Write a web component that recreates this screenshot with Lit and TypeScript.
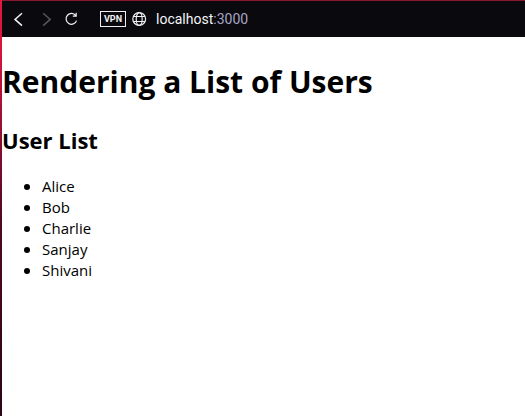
import { LitElement, html, css } from "lit";
import { customElement, property } from "lit/decorators.js";

@customElement("browser-bar")
export class BrowserBar extends LitElement {
  @property() host = "localhost";
  @property() port = "3000";

  static styles = css`
    :host {
      display: flex;
      align-items: center;
      gap: 12px;
      height: 36px;
      padding-left: 10px;
      background: #09090e;
      font-family: Roboto, sans-serif;
    }
    .nav,
    .site {
      display: flex;
      align-items: center;
    }
    .nav {
      gap: 10px;
    }
    button {
      display: flex;
      align-items: center;
      justify-content: center;
      width: 16px;
      height: 16px;
      padding: 0;
      border: 0;
      background: none;
      color: #f0f0f4;
      font: inherit;
    }
    button:disabled {
      color: #56565c;
    }
    svg {
      display: block;
      flex: none;
      fill: none;
      stroke: currentColor;
    }
    .site {
      gap: 6px;
      margin-left: 8px;
    }
    .vpn {
      box-sizing: border-box;
      width: 26px;
      border: 1px solid #f0f0f4;
      font-size: 9px;
      font-weight: 700;
    }
    .address {
      margin-left: 2px;
      font-size: 14px;
      line-height: 20px;
      color: #f4f4f8;
      outline: none;
      white-space: nowrap;
    }
    .port {
      color: #a9a6c4;
    }
  `;

  render() {
    return html`
      <nav class="nav" aria-label="History">
        <button aria-label="Back">
          <svg width="16" height="16" stroke-width="1.5"><path d="M10 2.200 3 8.400 10 14.600" /></svg>
        </button>
        <button aria-label="Forward" disabled>
          <svg width="16" height="16" stroke-width="1.5"><path d="M5.200 2.200 12.200 8.400 5.200 14.600" /></svg>
        </button>
        <button aria-label="Reload">
          <svg width="16" height="16" stroke-width="1.2">
            <path d="M11.800 4.600A5.400 5.400 0 1 0 12.600 9.600M12.200 1.800V5.200H8.800" />
          </svg>
        </button>
      </nav>
      <div class="site">
        <button class="vpn">VPN</button>
        <button aria-label="Site information">
          <svg width="16" height="16" stroke-width="1.2">
            <circle cx="7.200" cy="8" r="6.400" />
            <ellipse cx="7.200" cy="8" rx="3" ry="6.400" />
            <path d="M1.500 5.500H12.900M1.500 10.500H12.900" />
          </svg>
        </button>
        <div class="address" role="textbox" aria-label="Address" contenteditable="true"
          >${this.host}<span class="port">:${this.port}</span></div>
      </div>
    `;
  }
}

@customElement("user-list")
export class UserList extends LitElement {
  @property({ attribute: false }) users: string[] = [];

  static styles = css`
    :host {
      display: block;
    }
    h2 {
      margin: 20px 0;
      font-size: 22px;
      line-height: 32px;
      font-weight: 700;
    }
    ul {
      margin: 0;
      padding-left: 40px;
    }
    li {
      line-height: 21px;
    }
    li::marker {
      font-size: 16px;
    }
  `;

  render() {
    return html`
      <h2>User List</h2>
      <ul>
        ${this.users.map((user) => html`<li>${user}</li>`)}
      </ul>
    `;
  }
}

@customElement("app-root")
export class AppRoot extends LitElement {
  private users = ["Alice", "Bob", "Charlie", "Sanjay", "Shivani"];

  static styles = css`
    :host {
      display: grid;
      grid-template-columns: 2px 1fr;
      min-height: 100vh;
      background: #fff;
    }
    .edge {
      background: linear-gradient(#e3173f, #d8143e 50px, #8a0e34 140px, #500822 220px, #2c0418);
    }
    .window {
      border-top: 1px solid #8a1630;
    }
    main {
      color: #000;
      font-family: "Segoe UI", "Open Sans", "Noto Sans", sans-serif;
      font-size: 15px;
    }
    h1 {
      margin: 23px 0 20px;
      font-size: 30px;
      line-height: 44px;
      font-weight: 700;
    }
  `;

  render() {
    return html`
      <div class="edge"></div>
      <div class="window">
        <browser-bar></browser-bar>
        <main>
          <h1>Rendering a List of Users</h1>
          <user-list .users=${this.users}></user-list>
        </main>
      </div>
    `;
  }
}
